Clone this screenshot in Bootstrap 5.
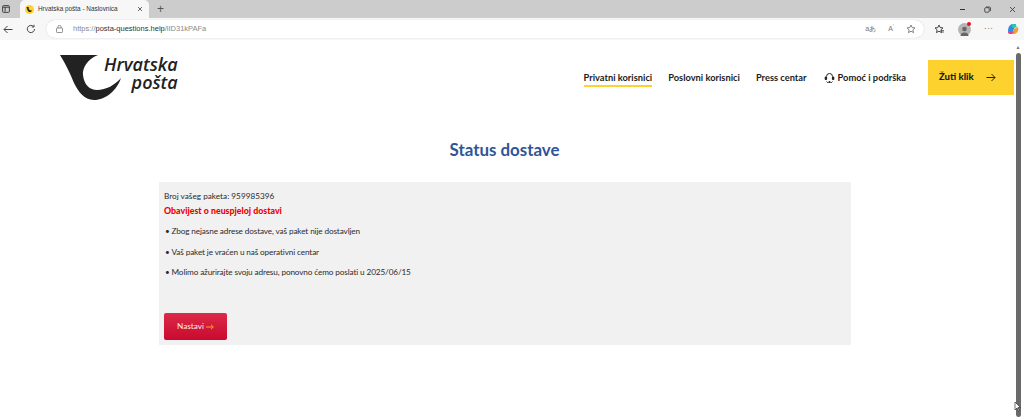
<!DOCTYPE html>
<html lang="hr">
<head>
  <meta charset="UTF-8">
  <title>Hrvatska pošta - Naslovnica</title>
  <link rel="stylesheet" href="https://cdn.jsdelivr.net/npm/bootstrap@5.3.0/dist/css/bootstrap.min.css">
  <style>
    html, body { height: 100%; overflow: hidden; }
    body { font-family: Lato, sans-serif; color: #222; background: #fff; }
    .tab-strip { height: 18px; background: #cccccc; font-family: "Liberation Sans", sans-serif; }
    .win-btn { width: 12px; margin-right: 8px; }
    .browser-tab { width: 129px; height: 18px; background: #f7f7f7; border-radius: 5px 5px 0 0; font-size: 6.4px; color: #333; padding: 0 6px 0 5px; }
    .tab-icon { width: 9px; height: 9px; border-radius: 50%; background: #fdd22e; margin-right: 4px; }
    .plus-btn { font-size: 12px; color: #555; margin-left: 8px; line-height: 1; }
    .win-ctl { gap: 18px; padding-right: 8px; }
    .tool-bar { height: 22px; background: #f7f7f7; font-family: "Liberation Sans", sans-serif; }
    .back-ic { width: 16px; }
    .reload-ic { width: 30px; }
    .url-box { width: 878px; height: 18px; flex: none; background: #fff; border-radius: 9px; box-shadow: 0 0 1px #bbb; font-size: 7.5px; padding: 0 8px 0 10px; color: #8a8a8a; }
    .url-box b { color: #333; font-weight: 400; }
    .lock-ic { margin-right: 10px; }
    .url-tools { gap: 12px; color: #777; font-size: 7px; }
    .side-tools { width: 100px; padding-left: 10px; padding-right: 5px; }
    .user-pic { width: 13px; height: 13px; border-radius: 50%; background: #b4b4b4; }
    .user-dot { width: 4px; height: 4px; border-radius: 50%; background: #e81123; position: absolute; left: 9px; top: -1px; }
    .dots-ic { font-size: 8px; color: #444; letter-spacing: .5px; line-height: 1; }
    .page-wrap { height: 377px; }
    .page-main { width: 1014px; flex: none; }
    .site-head { height: 65px; margin-top: 15px; }
    .logo-box { margin-left: 60px; height: 46px; }
    .logo-mark { margin-right: -18px; flex: none; }
    .logo-text { font-family: "Open Sans", sans-serif; font-style: italic; font-weight: 600; font-size: 18px; line-height: 18px; color: #222; text-align: right; }
    .logo-text span { display: block; }
    .top-nav { font-size: 9.3px; font-weight: 700; color: #1c1c1c; margin-top: 5px; }
    .top-link { padding: 3px 0 1px; margin-right: 16px; border-bottom: 2px solid transparent; white-space: nowrap; }
    .top-link.on { border-bottom-color: #fdd22e; }
    .help-link { margin-left: 1px; margin-right: 22px; }
    .help-ic { margin-right: 3px; }
    .yellow-btn { width: 86px; height: 35px; background: #fdd22e; font-size: 9.5px; font-weight: 900; padding: 0 18px 0 11px; }
    .status-title { font-size: 16.9px; font-weight: 700; color: #2f5597; margin: 0 0 0 -5px; padding-top: 18px; height: 62px; line-height: 24px; text-align: center; }
    .status-panel { width: 692px; height: 163px; margin-left: 159px; background: #f1f1f1; font-size: 8.2px; letter-spacing: -.12px; padding: 8px 5px; line-height: 12px; color: #2b2b2b; }
    .status-panel p { margin: 0 0 3px; }
    .parcel-no { letter-spacing: .02px; }
    .fail-note { color: #f00000; font-weight: 900; font-size: 8.8px; letter-spacing: 0; }
    .status-list { padding-left: 0; margin: 8px 0 0; list-style: none; }
    .status-list li { margin-bottom: 8.7px; display: flex; }
    .status-list li::before { content: "•"; width: 7.5px; flex: none; padding-left: 1px; }
    .go-btn { width: 63px; height: 27px; margin-top: 26px; padding: 0; border: 0; border-radius: 2px; color: #fdeef0; font-size: 8.2px; background: linear-gradient(#dc2a48, #c90a2e); }
    .scroll-rail { width: 8px; background: #fff; }
    .scroll-thumb { width: 5px; flex: 1; background: #6a6a6a; border-radius: 3px; margin: 2px auto 0; }
    .scroll-top { font-size: 5px; color: #777; text-align: center; height: 11px; line-height: 14px; }
    .mouse-ptr { position: absolute; left: 1014px; top: 401px; }
  </style>
</head>
<body>
  <!-- Browser tabs -->
  <div class="tab-strip d-flex align-items-center">
    <div class="win-btn d-flex justify-content-center">
      <svg width="8" height="8" viewBox="0 0 9 9"><rect x=".7" y=".7" width="7.6" height="7.6" rx="1" fill="none" stroke="#333"/><path d="M1 2.500h7M3.500 2.500v5" stroke="#333"/></svg>
    </div>
    <div class="browser-tab d-flex align-items-center">
      <span class="tab-icon d-flex align-items-center justify-content-center">
        <svg width="7" height="7" viewBox="0 0 7 7"><path d="M.5 1h2.200C2.200 3 3.500 4.800 6 4.400 5 6.600 2 6.400 1.500 4z" fill="#222"/></svg>
      </span>
      <span class="flex-grow-1">Hrvatska pošta - Naslovnica</span>
      <svg width="6" height="6" viewBox="0 0 6 6"><path d="M1 1l4 4M5 1L1 5" stroke="#444" stroke-width=".8"/></svg>
    </div>
    <span class="plus-btn">+</span>
    <div class="flex-grow-1"></div>
    <div class="win-ctl d-flex justify-content-end align-items-center">
      <svg width="7" height="7" viewBox="0 0 7 7"><path d="M1 3.500h5" stroke="#333"/></svg>
      <svg width="7" height="7" viewBox="0 0 7 7"><rect x=".7" y="1.700" width="4.500" height="4.500" rx="1" fill="none" stroke="#333" stroke-width=".8"/><path d="M2 1h3.500a1 1 0 0 1 1 1v3" fill="none" stroke="#333" stroke-width=".8"/></svg>
      <svg width="7" height="7" viewBox="0 0 7 7"><path d="M1 1l5 5M6 1L1 6" stroke="#333" stroke-width=".8"/></svg>
    </div>
  </div>

  <!-- Address bar -->
  <div class="tool-bar d-flex align-items-center">
    <div class="back-ic d-flex justify-content-center">
      <svg width="10" height="9" viewBox="0 0 10 9"><path d="M9.500 4.500H1M4.500 1L1 4.500 4.500 8" fill="none" stroke="#444"/></svg>
    </div>
    <div class="reload-ic d-flex justify-content-center">
      <svg width="10" height="10" viewBox="0 0 10 10"><path d="M8.500 5a3.600 3.600 0 1 1-1-2.500M8 .8v2.200H5.800" fill="none" stroke="#444"/></svg>
    </div>
    <div class="url-box d-flex align-items-center">
      <svg class="lock-ic" width="7" height="8" viewBox="0 0 7 8"><rect x=".5" y="3" width="6" height="4.500" rx=".7" fill="none" stroke="#666" stroke-width=".7"/><path d="M2 3V1.800a1.500 1.500 0 0 1 3 0V3" fill="none" stroke="#666" stroke-width=".7"/></svg>
      <span class="flex-grow-1">https://<b>posta-questions.help</b>/lID31kPAFa</span>
      <span class="url-tools d-flex align-items-center">
        <span>aあ</span><span>A<sup>ʼ</sup></span>
        <svg width="10" height="10" viewBox="0 0 10 10"><path d="M5 1l1.200 2.600 2.800.3-2.100 1.900.6 2.800L5 7.200 2.500 8.600l.6-2.800L1 3.900l2.800-.3z" fill="none" stroke="#666" stroke-width=".8"/></svg>
      </span>
    </div>
    <div class="side-tools d-flex align-items-center justify-content-between">
      <svg width="10" height="10" viewBox="0 0 10 10"><path d="M5 1l1.200 2.600 2.800.3-2.100 1.900.6 2.800L5 7.200 2.500 8.600l.6-2.800L1 3.900l2.800-.3z" fill="none" stroke="#333" stroke-width=".9"/><path d="M7 6.500h3M7 8h3" stroke="#333" stroke-width=".7"/></svg>
      <span class="user-pic position-relative d-flex justify-content-center align-items-end">
        <svg width="9" height="11" viewBox="0 0 9 11"><circle cx="4.500" cy="4" r="2.300" fill="#666"/><path d="M.5 11a4 3.500 0 0 1 8 0z" fill="#666"/></svg>
        <span class="user-dot"></span>
      </span>
      <span class="dots-ic">···</span>
      <svg width="12" height="12" viewBox="0 0 12 12"><path d="M1 8C1 4 3 1 6 1h3L7 6 5 11H3C2 11 1 10 1 8z" fill="#2b8fe8"/><path d="M4 1h3c1 0 2 1 3 3L7 5 5 4z" fill="#36c4a8"/><path d="M11 4c1 3-1 7-4 7H5l2-5z" fill="#f0a030"/><path d="M5 11H3c-1 0-2-1-2-2l3-1 3 1z" fill="#e0487e"/></svg>
    </div>
  </div>

  <div class="page-wrap d-flex">
    <div class="page-main">
      <!-- Site header -->
      <header class="site-head d-flex align-items-start justify-content-between">
        <div class="logo-box d-flex">
          <svg class="logo-mark" width="62" height="46" viewBox="0 0 62 46">
            <path d="M0 0H38C27 4 22 14 23 20C24 30 30 35 37 35C46 35 55 30 61 23C57 35 46 45 34 45C24 45 18 36 14 28C10 18 5 8 0 0Z" fill="#222"/>
          </svg>
          <div class="logo-text"><span>Hrvatska</span><span>pošta</span></div>
        </div>
        <div class="top-nav d-flex align-items-center">
          <div class="top-link on">Privatni korisnici</div>
          <div class="top-link">Poslovni korisnici</div>
          <div class="top-link">Press centar</div>
          <div class="top-link help-link d-flex align-items-center">
            <svg class="help-ic" width="11" height="11" viewBox="0 0 11 11"><path d="M2.500 4.500a3 3 0 0 1 6 0M2.500 9.500a3.500 3.500 0 0 0 6 0" fill="none" stroke="#222" stroke-width="1"/><rect x=".7" y="4.500" width="2.400" height="3.500" rx="1" fill="#222"/><rect x="7.900" y="4.500" width="2.400" height="3.500" rx="1" fill="#222"/><circle cx="5.500" cy="10" r="1" fill="#222"/></svg>
            Pomoć i podrška
          </div>
          <div class="yellow-btn d-flex align-items-center justify-content-between">
            <span>Žuti klik</span>
            <svg width="10" height="9" viewBox="0 0 10 9"><path d="M.5 4.500h8.500M5.500 1l3.500 3.500L5.500 8" fill="none" stroke="#222" stroke-width="1"/></svg>
          </div>
        </div>
      </header>

      <h1 class="status-title">Status dostave</h1>

      <!-- Delivery status -->
      <div class="status-panel">
        <p class="parcel-no">Broj vašeg paketa: 959985396</p>
        <p class="fail-note">Obavijest o neuspjeloj dostavi</p>
        <ul class="status-list">
          <li>Zbog nejasne adrese dostave, vaš paket nije dostavljen</li>
          <li>Vaš paket je vraćen u naš operativni centar</li>
          <li>Molimo ažurirajte svoju adresu, ponovno ćemo poslati u 2025/06/15</li>
        </ul>
        <button type="button" class="btn go-btn">Nastavi
          <svg width="8" height="6" viewBox="0 0 8 6"><path d="M0 3h7M5 .8L7.300 3 5 5.200" fill="none" stroke="#f7a823" stroke-width="1"/></svg>
        </button>
      </div>
    </div>
    <div class="scroll-rail d-flex flex-column">
      <div class="scroll-top">▲</div>
      <div class="scroll-thumb"></div>
    </div>
  </div>

  <svg class="mouse-ptr" width="7" height="11" viewBox="0 0 7 11"><path d="M1 1v8l2-2 1.500 3 1-.5L4 6.500h2.500z" fill="#fff" stroke="#333" stroke-width=".7"/></svg>
  <script src="https://cdn.jsdelivr.net/npm/bootstrap@5.3.0/dist/js/bootstrap.bundle.min.js"></script>
</body>
</html>
